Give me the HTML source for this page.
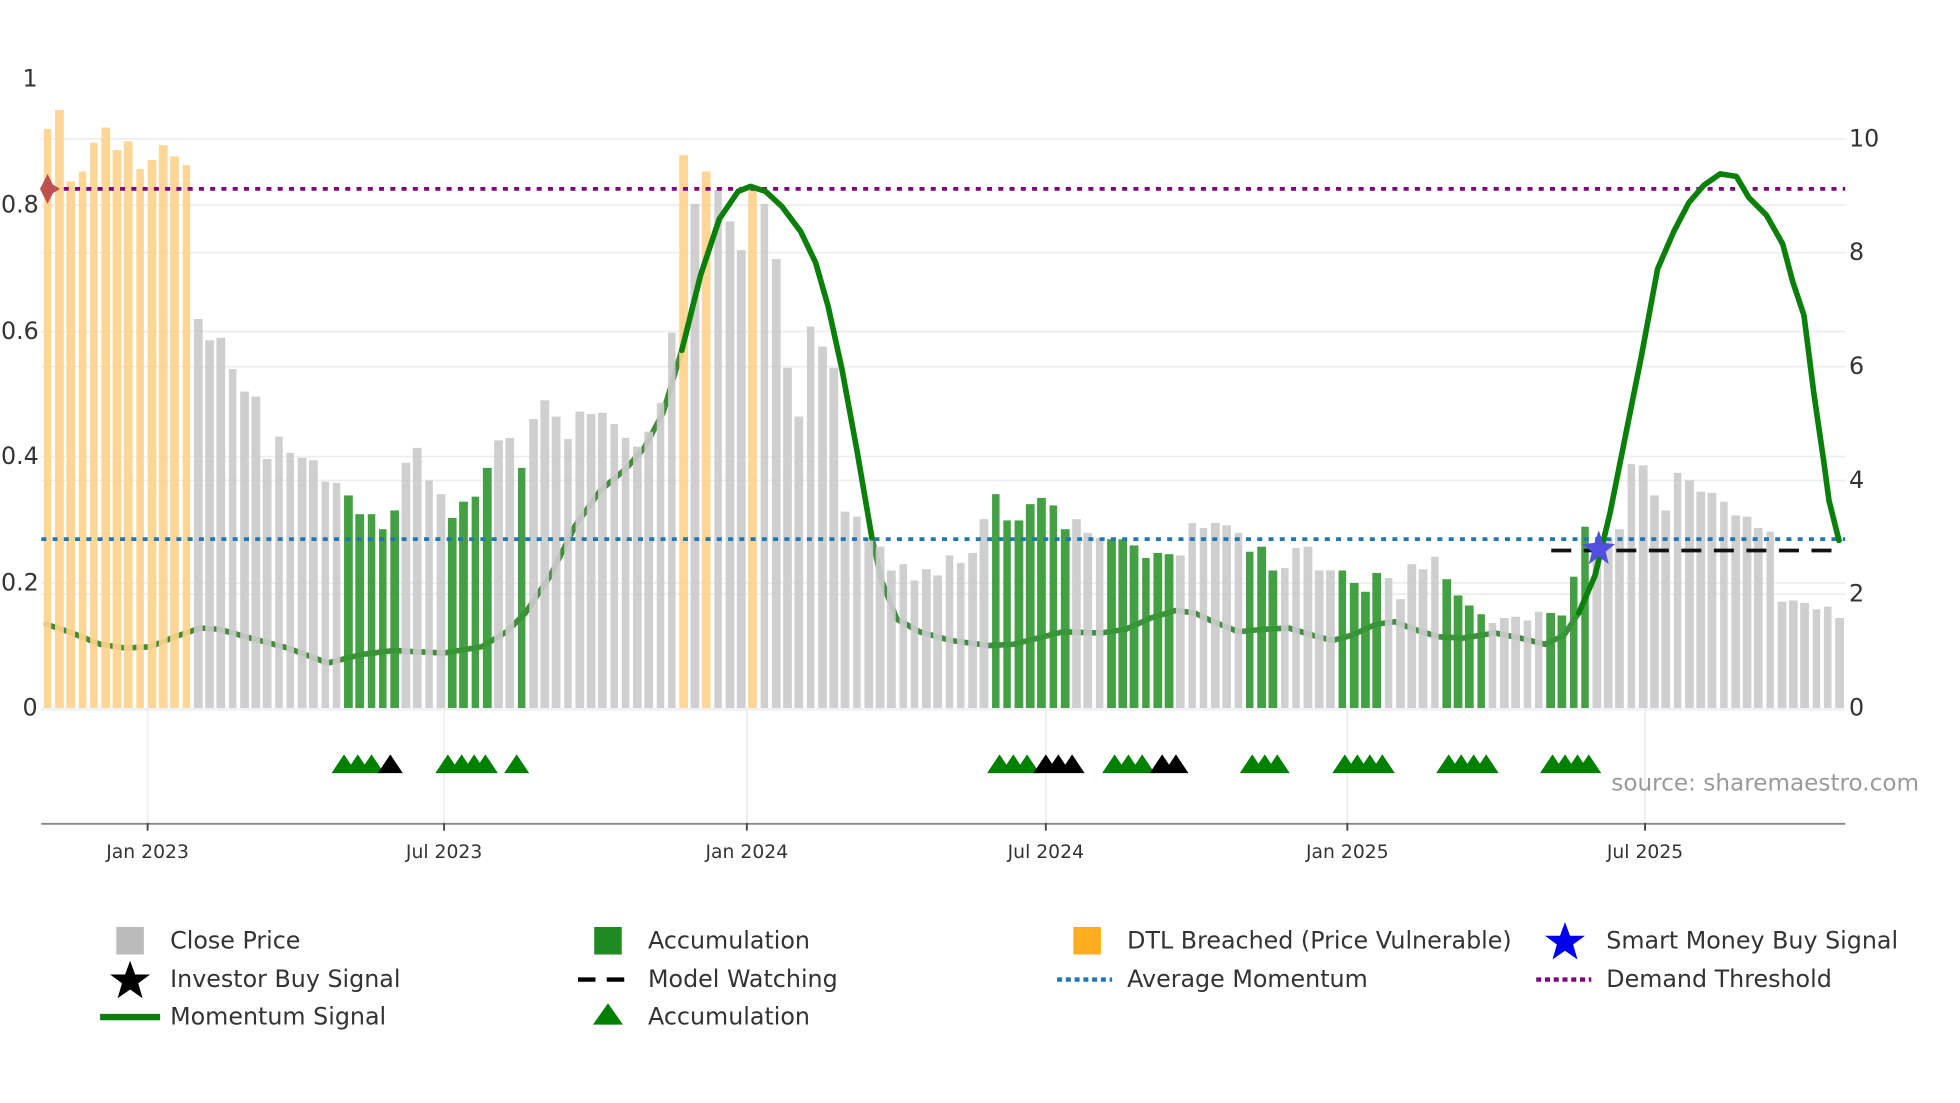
<!DOCTYPE html>
<html><head><meta charset="utf-8"><style>
html,body{margin:0;padding:0;background:#fff;width:1960px;height:1102px;overflow:hidden}
#w{position:absolute;left:0;top:0;width:1570px;height:882px;transform:scale(1.251);transform-origin:0 0;font-family:"DejaVu Sans","Liberation Sans",sans-serif;color:#333}
.t{position:absolute;white-space:nowrap;line-height:1}
#bars{position:absolute;left:33.5px;width:1441.5px;top:0;height:566px;display:grid;grid-template-columns:repeat(156,1fr);align-items:end}
#bars i{display:block;margin:0 1.3px}
.o{background:#ffd38c}.g{background:#cbcbcb}.a{background:#349a34}
.lg{position:absolute;font-size:19px;color:#333;white-space:nowrap;line-height:1}
</style></head><body><div id="w">
<svg style="position:absolute;left:0;top:0" width="1570" height="882">
<g stroke="#ececf2" stroke-width="1.3">
<line x1="33" x2="1475" y1="111" y2="111"/><line x1="33" x2="1475" y1="202" y2="202"/><line x1="33" x2="1475" y1="293" y2="293"/><line x1="33" x2="1475" y1="384" y2="384"/><line x1="33" x2="1475" y1="475" y2="475"/>
<line x1="33" x2="1475" y1="164" y2="164"/><line x1="33" x2="1475" y1="265" y2="265"/><line x1="33" x2="1475" y1="365" y2="365"/><line x1="33" x2="1475" y1="466" y2="466"/>
<line x1="118" x2="118" y1="566" y2="658"/><line x1="355" x2="355" y1="566" y2="658"/><line x1="597" x2="597" y1="566" y2="658"/><line x1="836" x2="836" y1="566" y2="658"/><line x1="1077" x2="1077" y1="566" y2="658"/><line x1="1315" x2="1315" y1="566" y2="658"/>
</g>
<g fill="none" stroke-linejoin="round" stroke-linecap="round" stroke-width="4.5">
<path stroke="#2e7e24" stroke-opacity="0.9" d="M37,499 L55,505 L80,515 L100,518 L120,517 L140,509 L160,502 L175,503 L200,510 L230,518 L262,530 L290,523 L315,520 L355,522 L385,517 L405,505 L420,490 L440,460 L460,420 L480,392 L500,375 L515,358 L530,330 L545,280 L560,220"/>
<path stroke="#2e7e2e" stroke-opacity="0.9" d="M697,430 L705,465 L717,495 L735,505 L760,512 L790,516 L810,515 L830,510 L850,505 L880,506 L900,503 L920,494 L940,488 L955,490 L970,497 L990,505 L1010,503 L1030,502 L1050,508 L1065,512 L1080,508 L1100,499 L1115,497 L1130,503 L1150,509 L1170,510 L1195,506 L1215,510 L1235,515 L1250,508 L1262,490"/>
</g>
</svg>
<div id="bars" style="opacity:0.92">
<i class=o style="height:463px"></i><i class=o style="height:478px"></i><i class=o style="height:421px"></i><i class=o style="height:429px"></i><i class=o style="height:452px"></i><i class=o style="height:464px"></i><i class=o style="height:446px"></i><i class=o style="height:453px"></i><i class=o style="height:431px"></i><i class=o style="height:438px"></i><i class=o style="height:450px"></i><i class=o style="height:441px"></i><i class=o style="height:434px"></i>
<i class=g style="height:311px"></i><i class=g style="height:294px"></i><i class=g style="height:296px"></i><i class=g style="height:271px"></i><i class=g style="height:253px"></i><i class=g style="height:249px"></i><i class=g style="height:199px"></i><i class=g style="height:217px"></i><i class=g style="height:204px"></i><i class=g style="height:200px"></i><i class=g style="height:198px"></i><i class=g style="height:181px"></i><i class=g style="height:180px"></i>
<i class=a style="height:170px"></i><i class=a style="height:155px"></i><i class=a style="height:155px"></i><i class=a style="height:143px"></i><i class=a style="height:158px"></i>
<i class=g style="height:196px"></i><i class=g style="height:208px"></i><i class=g style="height:182px"></i><i class=g style="height:171px"></i>
<i class=a style="height:152px"></i><i class=a style="height:165px"></i><i class=a style="height:169px"></i><i class=a style="height:192px"></i>
<i class=g style="height:214px"></i><i class=g style="height:216px"></i>
<i class=a style="height:192px"></i>
<i class=g style="height:231px"></i><i class=g style="height:246px"></i><i class=g style="height:233px"></i><i class=g style="height:215px"></i><i class=g style="height:237px"></i><i class=g style="height:235px"></i><i class=g style="height:236px"></i><i class=g style="height:227px"></i><i class=g style="height:216px"></i><i class=g style="height:209px"></i><i class=g style="height:221px"></i><i class=g style="height:244px"></i><i class=g style="height:300px"></i>
<i class=o style="height:442px"></i><i class=g style="height:403px"></i><i class=o style="height:429px"></i><i class=g style="height:414px"></i><i class=g style="height:389px"></i><i class=g style="height:366px"></i><i class=o style="height:416px"></i><i class=g style="height:403px"></i><i class=g style="height:359px"></i><i class=g style="height:272px"></i><i class=g style="height:233px"></i><i class=g style="height:305px"></i><i class=g style="height:289px"></i><i class=g style="height:272px"></i><i class=g style="height:157px"></i><i class=g style="height:153px"></i><i class=g style="height:136px"></i><i class=g style="height:129px"></i><i class=g style="height:110px"></i><i class=g style="height:115px"></i><i class=g style="height:102px"></i><i class=g style="height:111px"></i><i class=g style="height:106px"></i><i class=g style="height:122px"></i><i class=g style="height:116px"></i><i class=g style="height:124px"></i><i class=g style="height:151px"></i>
<i class=a style="height:171px"></i><i class=a style="height:150px"></i><i class=a style="height:150px"></i><i class=a style="height:163px"></i><i class=a style="height:168px"></i><i class=a style="height:162px"></i><i class=a style="height:143px"></i>
<i class=g style="height:151px"></i><i class=g style="height:140px"></i><i class=g style="height:136px"></i>
<i class=a style="height:135px"></i><i class=a style="height:135px"></i><i class=a style="height:130px"></i><i class=a style="height:120px"></i><i class=a style="height:124px"></i><i class=a style="height:123px"></i>
<i class=g style="height:122px"></i><i class=g style="height:148px"></i><i class=g style="height:144px"></i><i class=g style="height:148px"></i><i class=g style="height:146px"></i><i class=g style="height:140px"></i>
<i class=a style="height:125px"></i><i class=a style="height:129px"></i><i class=a style="height:110px"></i>
<i class=g style="height:112px"></i><i class=g style="height:128px"></i><i class=g style="height:129px"></i><i class=g style="height:110px"></i><i class=g style="height:110px"></i>
<i class=a style="height:110px"></i><i class=a style="height:100px"></i><i class=a style="height:93px"></i><i class=a style="height:108px"></i>
<i class=g style="height:104px"></i><i class=g style="height:87px"></i><i class=g style="height:115px"></i><i class=g style="height:111px"></i><i class=g style="height:121px"></i>
<i class=a style="height:103px"></i><i class=a style="height:90px"></i><i class=a style="height:82px"></i><i class=a style="height:75px"></i>
<i class=g style="height:68px"></i><i class=g style="height:72px"></i><i class=g style="height:73px"></i><i class=g style="height:70px"></i><i class=g style="height:77px"></i>
<i class=a style="height:76px"></i><i class=a style="height:74px"></i><i class=a style="height:105px"></i><i class=a style="height:145px"></i>
<i class=g style="height:131px"></i><i class=g style="height:136px"></i><i class=g style="height:143px"></i><i class=g style="height:195px"></i><i class=g style="height:194px"></i><i class=g style="height:170px"></i><i class=g style="height:158px"></i><i class=g style="height:188px"></i><i class=g style="height:182px"></i><i class=g style="height:173px"></i><i class=g style="height:172px"></i><i class=g style="height:165px"></i><i class=g style="height:154px"></i><i class=g style="height:153px"></i><i class=g style="height:144px"></i><i class=g style="height:141px"></i><i class=g style="height:85px"></i><i class=g style="height:86px"></i><i class=g style="height:84px"></i><i class=g style="height:79px"></i><i class=g style="height:81px"></i><i class=g style="height:72px"></i>
</div>
<svg style="position:absolute;left:0;top:0" width="1570" height="882">
<line x1="33" x2="1475" y1="567" y2="567" stroke="#eef0f6" stroke-width="2"/>
<line x1="33" x2="1475" y1="151" y2="151" stroke="#800080" stroke-width="3" stroke-dasharray="4 5"/>
<line x1="33" x2="1475" y1="431" y2="431" stroke="#1f77b4" stroke-width="3" stroke-dasharray="4 5"/>
<line x1="1240" x2="1466" y1="440" y2="440" stroke="#111" stroke-width="3" stroke-dasharray="16 10"/>
<g fill="none" stroke-linejoin="round" stroke-linecap="round" stroke-width="4.5">
<path stroke="#0a800a" d="M545,280 L560,220 L575,175 L590,153 L600,149 L612,153 L625,165 L640,185 L652,210 L662,245 L673,295 L685,360 L697,430"/>
<path stroke="#0a800a" d="M1262,490 L1275,460 L1287,410 L1300,345 L1312,285 L1325,215 L1338,185 L1350,162 L1362,148 L1375,139 L1388,141 L1398,158 L1412,172 L1425,195 L1433,225 L1442,252 L1450,315 L1458,370 L1462,400 L1470,432"/>
</g>
<path d="M38,139 L44,151 L38,163 L32,151Z M38,145 L48,151 L38,157Z" fill="#c0504d"/>
<path d="M1278,424 L1281.5,434 L1291,435 L1283.5,441 L1286,451 L1278,445 L1270,451 L1272.5,441 L1265,435 L1274.5,434Z" fill="#5050dd"/>
<g fill="#008000">
<path d="M265,618h20l-10,-15z M276,618h20l-10,-15z M287,618h20l-10,-15z"/>
<path d="M348,618h20l-10,-15z M359,618h20l-10,-15z M369,618h20l-10,-15z M378,618h20l-10,-15z M403,618h20l-10,-15z"/>
<path d="M789,618h20l-10,-15z M800,618h20l-10,-15z M811,618h20l-10,-15z"/>
<path d="M881,618h20l-10,-15z M892,618h20l-10,-15z M903,618h20l-10,-15z"/>
<path d="M991,618h20l-10,-15z M1001,618h20l-10,-15z M1011,618h20l-10,-15z"/>
<path d="M1065,618h20l-10,-15z M1075,618h20l-10,-15z M1085,618h20l-10,-15z M1095,618h20l-10,-15z"/>
<path d="M1148,618h20l-10,-15z M1158,618h20l-10,-15z M1168,618h20l-10,-15z M1178,618h20l-10,-15z"/>
<path d="M1231,618h20l-10,-15z M1241,618h20l-10,-15z M1251,618h20l-10,-15z M1260,618h20l-10,-15z"/>
</g>
<g fill="#000">
<path d="M302,618h20l-10,-15z M826,618h20l-10,-15z M836,618h20l-10,-15z M847,618h20l-10,-15z M919,618h20l-10,-15z M930,618h20l-10,-15z"/>
</g>
<line x1="33" x2="1475" y1="658.5" y2="658.5" stroke="#888" stroke-width="1.5"/>
<g stroke="#444" stroke-width="1.5"><line x1="118" x2="118" y1="658" y2="664"/><line x1="355" x2="355" y1="658" y2="664"/><line x1="597" x2="597" y1="658" y2="664"/><line x1="836" x2="836" y1="658" y2="664"/><line x1="1077" x2="1077" y1="658" y2="664"/><line x1="1315" x2="1315" y1="658" y2="664"/></g>
<rect x="93" y="741" width="22" height="22" fill="#bbb"/>
<rect x="475" y="741" width="22" height="22" fill="#1f8a1f"/>
<rect x="858" y="741" width="22" height="22" fill="#ffad1f"/>
<path d="M1251,737 L1255,748 L1267,748 L1257.5,755 L1261,767 L1251,760 L1241,767 L1244.5,755 L1235,748 L1247,748Z" fill="#0000ee"/>
<path d="M104,768 L108,779 L120,779 L110.5,786 L114,798 L104,791 L94,798 L97.5,786 L88,779 L100,779Z" fill="#000"/>
<line x1="462" x2="506" y1="783" y2="783" stroke="#000" stroke-width="3.5" stroke-dasharray="14 9"/>
<line x1="845" x2="889" y1="783" y2="783" stroke="#1f77b4" stroke-width="3.5" stroke-dasharray="4 3"/>
<line x1="1228" x2="1272" y1="783" y2="783" stroke="#800080" stroke-width="3.5" stroke-dasharray="4 3"/>
<line x1="80" x2="128" y1="813" y2="813" stroke="#0a800a" stroke-width="5"/>
<path d="M474,819h24l-12,-17z" fill="#008000"/>
</svg>
<div class="t" style="left:18px;top:54px;font-size:19px">1</div>
<div class="t" style="left:0;top:155px;font-size:19px;width:31px;text-align:right">0.8</div>
<div class="t" style="left:0;top:256px;font-size:19px;width:31px;text-align:right">0.6</div>
<div class="t" style="left:0;top:356px;font-size:19px;width:31px;text-align:right">0.4</div>
<div class="t" style="left:0;top:457px;font-size:19px;width:31px;text-align:right">0.2</div>
<div class="t" style="left:18px;top:557px;font-size:19px">0</div>
<div class="t" style="left:1478px;top:102px;font-size:19px">10</div>
<div class="t" style="left:1478px;top:193px;font-size:19px">8</div>
<div class="t" style="left:1478px;top:284px;font-size:19px">6</div>
<div class="t" style="left:1478px;top:375px;font-size:19px">4</div>
<div class="t" style="left:1478px;top:466px;font-size:19px">2</div>
<div class="t" style="left:1478px;top:557px;font-size:19px">0</div>
<div class="t" style="left:58px;top:674px;font-size:15px;width:120px;text-align:center">Jan 2023</div>
<div class="t" style="left:295px;top:674px;font-size:15px;width:120px;text-align:center">Jul 2023</div>
<div class="t" style="left:537px;top:674px;font-size:15px;width:120px;text-align:center">Jan 2024</div>
<div class="t" style="left:776px;top:674px;font-size:15px;width:120px;text-align:center">Jul 2024</div>
<div class="t" style="left:1017px;top:674px;font-size:15px;width:120px;text-align:center">Jan 2025</div>
<div class="t" style="left:1255px;top:674px;font-size:15px;width:120px;text-align:center">Jul 2025</div>
<div class="t" style="left:1288px;top:618px;font-size:18.5px;color:#9a9a9a">source: sharemaestro.com</div>
<div class="lg" style="left:136px;top:743px">Close Price</div>
<div class="lg" style="left:518px;top:743px">Accumulation</div>
<div class="lg" style="left:901px;top:743px">DTL Breached (Price Vulnerable)</div>
<div class="lg" style="left:1284px;top:743px">Smart Money Buy Signal</div>
<div class="lg" style="left:136px;top:774px">Investor Buy Signal</div>
<div class="lg" style="left:518px;top:774px">Model Watching</div>
<div class="lg" style="left:901px;top:774px">Average Momentum</div>
<div class="lg" style="left:1284px;top:774px">Demand Threshold</div>
<div class="lg" style="left:136px;top:804px">Momentum Signal</div>
<div class="lg" style="left:518px;top:804px">Accumulation</div>
</div></body></html>
